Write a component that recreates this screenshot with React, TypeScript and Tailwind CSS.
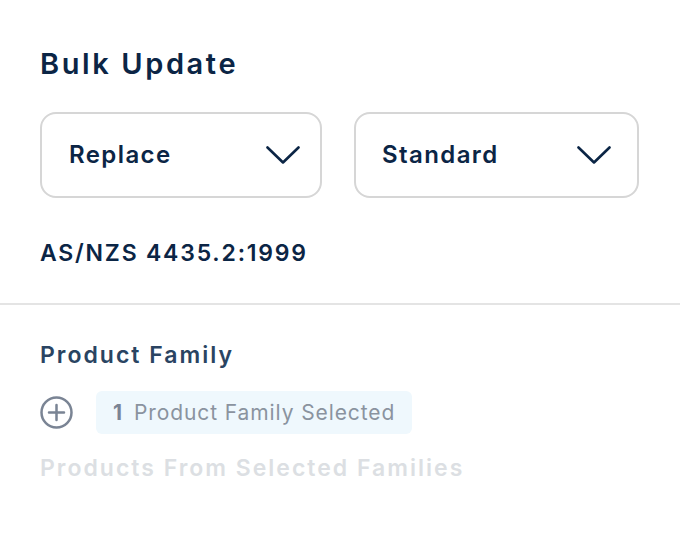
const ChevronDown = () => (
  <svg width="34" height="18" viewBox="0 0 34 18" fill="none" className="shrink-0">
    <path d="M1.5 1.5 L17 16.5 L32.5 1.5" stroke="#0b2545" strokeWidth="2.6" strokeLinecap="round" strokeLinejoin="round" />
  </svg>
);

const PlusCircle = () => (
  <svg width="33" height="33" viewBox="0 0 33 33" fill="none" className="shrink-0">
    <circle cx="16.5" cy="16.5" r="15" stroke="#7a8494" strokeWidth="2.5" />
    <path d="M16.5 9 V24 M9 16.5 H24" stroke="#7a8494" strokeWidth="2.5" strokeLinecap="round" />
  </svg>
);

export default function App() {
  return (
    <main
      className="w-[680px] h-[540px] bg-white overflow-hidden flex flex-col"
      style={{ fontFamily: 'Inter, "Noto Sans", sans-serif' }}
    >
      {/* header + selects */}
      <section className="px-10 pt-[46px]">
        <h1 className="text-[29px] leading-[36px] font-semibold text-[#0b2545] tracking-[2.6px]">Bulk Update</h1>

        <div className="flex justify-between mt-[30px] pr-[1px]">
          <div className="w-[282px] h-[86px] rounded-[16px] border-2 border-[#d6d6d6] flex items-center justify-between pl-[27px] pr-[20px]">
            <span className="text-[24px] font-semibold text-[#0b2545] tracking-[1.4px]">Replace</span>
            <ChevronDown />
          </div>
          <div className="w-[285px] h-[86px] rounded-[16px] border-2 border-[#d6d6d6] flex items-center justify-between pl-[26px] pr-[26px]">
            <span className="text-[24px] font-semibold text-[#0b2545] tracking-[1.4px]">Standard</span>
            <ChevronDown />
          </div>
        </div>

        <p className="mt-[41px] text-[23px] leading-[28px] font-semibold text-[#0b2545] tracking-[1.8px]">AS/NZS 4435.2:1999</p>
      </section>

      <div className="mt-[36px] h-[2px] bg-[#e4e4e4]" />

      {/* product family */}
      <section className="px-10 pt-[36px]">
        <h2 className="text-[23px] leading-[28px] font-semibold text-[#2a4462] tracking-[2px]">Product Family</h2>

        <div className="flex items-center gap-[23px] mt-[22px]">
          <PlusCircle />
          <div className="h-[43px] w-[316px] rounded-[6px] bg-[#eff8fd] flex items-center pl-[17px] text-[21px] tracking-[0.9px]">
            <span className="font-bold text-[#7a8494] mr-[11px]">1</span>
            <span className="text-[#8a939f]">Product Family Selected</span>
          </div>
        </div>

        <p className="mt-[20px] text-[23px] leading-[28px] font-semibold text-[#dcdfe3] tracking-[2px]">Products From Selected Families</p>
      </section>
    </main>
  );
}
